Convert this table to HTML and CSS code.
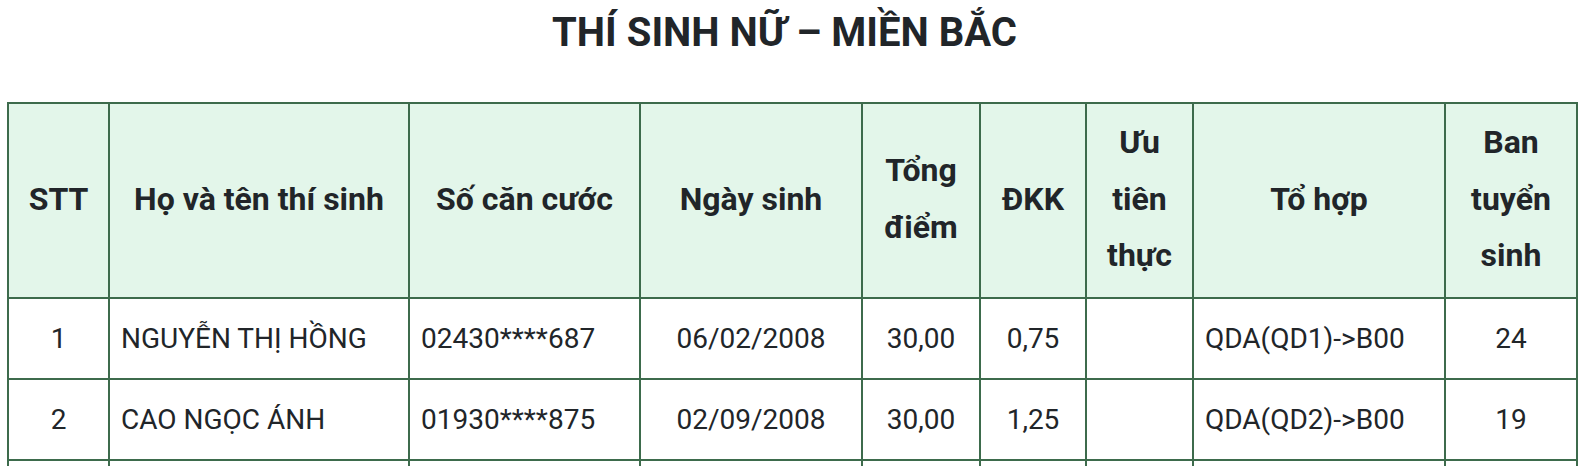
FILE: index.html
```html
<!DOCTYPE html>
<html lang="vi">
<head>
<meta charset="utf-8">
<link rel="stylesheet" href="styles.css">
</head>
<body>
<div class="page">
  <h1 class="title">THÍ SINH NỮ – MIỀN BẮC</h1>
  <table class="list">
    <colgroup>
      <col class="c-stt"><col class="c-name"><col class="c-id"><col class="c-dob"><col class="c-total"><col class="c-dkk"><col class="c-ut"><col class="c-th"><col class="c-ban">
    </colgroup>
    <thead>
      <tr>
        <th>STT</th>
        <th>Họ và tên thí sinh</th>
        <th>Số căn cước</th>
        <th>Ngày sinh</th>
        <th>Tổng điểm</th>
        <th>ĐKK</th>
        <th>Ưu tiên thực</th>
        <th>Tổ hợp</th>
        <th>Ban tuyển sinh</th>
      </tr>
    </thead>
    <tbody>
      <tr>
        <td>1</td>
        <td class="left">NGUYỄN THỊ HỒNG</td>
        <td class="left">02430****687</td>
        <td>06/02/2008</td>
        <td>30,00</td>
        <td>0,75</td>
        <td></td>
        <td class="left">QDA(QD1)-&gt;B00</td>
        <td>24</td>
      </tr>
      <tr>
        <td>2</td>
        <td class="left">CAO NGỌC ÁNH</td>
        <td class="left">01930****875</td>
        <td>02/09/2008</td>
        <td>30,00</td>
        <td>1,25</td>
        <td></td>
        <td class="left">QDA(QD2)-&gt;B00</td>
        <td>19</td>
      </tr>
      <tr>
        <td>3</td>
        <td class="left">NGUYỄN THỊ MAI</td>
        <td class="left">03330****512</td>
        <td>15/05/2008</td>
        <td>29,75</td>
        <td>0,75</td>
        <td></td>
        <td class="left">QDA(QD1)-&gt;B00</td>
        <td>24</td>
      </tr>
    </tbody>
  </table>
</div>
</body>
</html>
```

FILE: styles.css
```css
html, body {
  margin: 0;
  padding: 0;
  background: #ffffff;
}

body {
  font-family: Roboto, "Noto Sans", "Liberation Sans", sans-serif;
  color: #212529;
}

.page {
  padding: 9px 0 0 7px;
  width: 1570px;
}

.title {
  margin: 0 0 45px 0;
  width: 1555px;
  font-size: 40px;
  line-height: 48px;
  font-weight: 700;
  text-align: center;
}

.list {
  border-collapse: collapse;
  table-layout: fixed;
  width: 1569px;
  font-size: 28px;
}

.c-stt { width: 101px; }
.c-name { width: 300px; }
.c-id { width: 231px; }
.c-dob { width: 222px; }
.c-total { width: 118px; }
.c-dkk { width: 106px; }
.c-ut { width: 107px; }
.c-th { width: 252px; }
.c-ban { width: 132px; }

.list th,
.list td {
  border: 2px solid #3d6b4c;
  padding: 11.5px 11px;
  line-height: 56px;
  text-align: center;
  vertical-align: middle;
}

.list th {
  background: #e3f6ea;
  font-weight: 700;
  font-size: 32px;
  padding: 10px 11px 13.5px;
  line-height: 56.5px;
}

.list td {
  font-weight: 400;
}

.list td.left {
  text-align: left;
}
```
